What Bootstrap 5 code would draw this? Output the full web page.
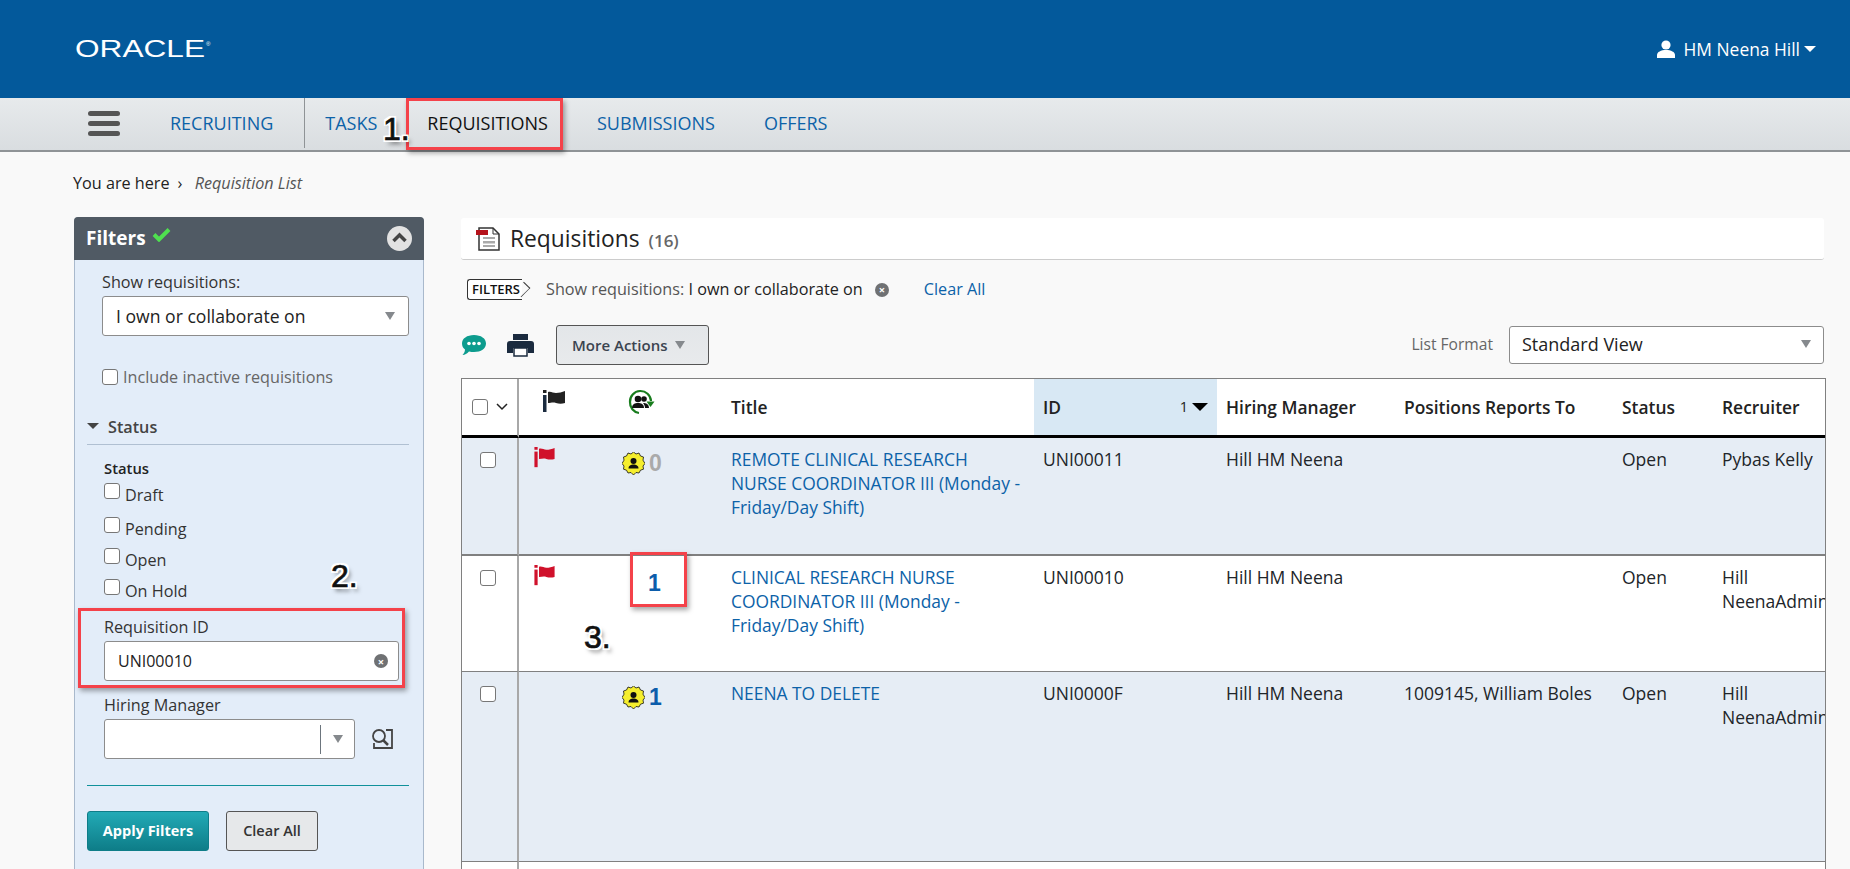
<!DOCTYPE html>
<html lang="en"><head><meta charset="utf-8"><title>Requisitions</title>
<link href="https://cdn.jsdelivr.net/npm/bootstrap@5.3.0/dist/css/bootstrap.min.css" rel="stylesheet">
<style>
html,body{height:869px;overflow:hidden}
body{background:#f9f9f9;font-family:"Open Sans",sans-serif;font-size:16px;color:#222;position:relative}
a{text-decoration:none;color:#0c62a8}
.top-hd{height:98px;background:#03599b;padding:0 34px 0 75px;color:#fff}
.user-nm{font-size:17.4px}
.caret-d{display:inline-block;border:6px solid transparent;border-top-color:currentColor;border-bottom:0}
.main-nav{height:54px;background:linear-gradient(#e7eaec,#d9dde0);border-bottom:2px solid #8f9396;padding:0 0 2px 88px;font-size:18px}
.nav-txt{color:#0c62a8}
.nav-cur{color:#111;margin-left:50px}
.nav-nx{margin-left:49px}
.burger{width:32px;margin-right:50px}
.burger span{display:block;height:5px;border-radius:3px;background:#555;margin:5px 0}
.nav-sep{width:1px;height:50px;background:#8f9396;margin:0 20px 0 31px}
.crumb{padding:19px 0 0 73px;font-size:16.2px;height:65px;color:#222}
.crumb em{color:#555}
.crumb-sep{margin:0 8px}
.page-cols{padding:0 26px 0 74px;gap:37px}
.flt{width:350px;height:660px;background:#e3edf9;border:1px solid #a9b9cc;border-radius:4px 4px 0 0;flex:none}
.flt-hd{height:43px;background:#505a64;color:#fff;margin:-1px -1px 0;border-radius:4px 4px 0 0;padding:0 12px;font-weight:700;font-size:19px}
.chk-ic{vertical-align:3px;margin-left:1px}
.flt-bd{padding:12px 14px 0 12px;color:#333;font-size:16.2px}
.sel-box{height:40px;background:#fff;border:1px solid #8c8c8c;border-radius:3px;padding:0 13px;color:#222;font-size:17.6px}
.val-sm{font-size:16px;width:295px;margin-top:4px}
.tri{display:inline-block;border:5px solid transparent;border-top:8px solid #85898d;border-bottom:0}
.cb{width:16px;height:16px;border:1.5px solid #777;border-radius:3px;background:#fff;flex:none;display:block}
.ind-a{margin-left:15px}
.ind-b{margin-left:17px}
.lbl{line-height:20px}
.cb-row{height:20px;gap:5px}
.inc-row{margin-top:31px;color:#666}
.sec-h{border-bottom:1px solid #b0c0d2;height:36px;font-weight:600;color:#444;margin-top:22px;padding-top:6px}
.sec-car{margin:8px 9px 0 0;color:#444}
.sub-h{color:#222;font-size:14.8px;font-weight:600;margin-top:13px}
.gap-a{margin-top:5px}.gap-b{margin-top:14px}.gap-c{margin-top:11px}
.gap-d{margin-top:18px}.gap-e{margin-top:14px}.gap-f{margin-top:4px}
.hm-box{width:251px;padding-right:0}
.hm-cell{width:34px;height:29px}
.x-big{width:18px;height:18px;font-size:15px;margin-right:-3px}
.btn-apply{height:40px;width:122px;background:linear-gradient(#22aab6,#0e7d88);color:#fff;font-weight:700;border:1px solid #0e7d88;border-radius:3px;font-size:14.5px}
.btn-clear{height:40px;background:#e6e8ea;border:1px solid #555;border-radius:3px;color:#333;font-size:14.5px;font-weight:600;width:92px}
.flt-btns{gap:17px}
.flt-div{border-top:1px solid #10919b;margin:26px 0 25px}
.mn{flex:1;min-width:0;margin-top:1px}
.tt-bar{height:42px;background:#fff;border-bottom:1px solid #ccc;border-radius:3px;padding:1px 0 0 14px;font-size:22.8px;gap:9px}
.tt-ct{font-size:17px;color:#666;font-weight:600;margin-left:3px}
.chips{height:65px;padding:0 0 6px 6px;font-size:16.2px;color:#555}
.chip-val{color:#222}
.chip-tag{font-size:13px;color:#111;border:1px solid #333;border-right:0;border-radius:3px 0 0 3px;padding:0 2px 0 4px;height:21px;line-height:19px;position:relative;font-weight:600;margin-right:24px;background:#fff;flex:none}
.chip-tag::after{content:"";position:absolute;right:-7px;top:3px;width:13px;height:13px;border-top:1px solid #333;border-right:1px solid #333;transform:rotate(45deg) scaleX(.7)}
.x-c{display:inline-flex;width:14px;height:14px;border-radius:50%;background:#6f7173;color:#fff;font-size:11px;font-weight:700;align-items:center;justify-content:center;line-height:1}
.chip-x{margin-left:12px}
.chip-clr{margin-left:35px}
.tools{height:40px;margin-bottom:13px}
.print-ic{margin-left:20px}
.btn-more{height:40px;width:153px;background:linear-gradient(#e3e6e9,#e8eaec);border:1px solid #555;border-radius:3px;color:#3b4450;font-weight:600;font-size:15px;margin-left:22px;padding-left:15px}
.fmt-lbl{font-size:15.6px;color:#666}
.fmt-sel{width:315px;height:38px;margin-left:16px;font-size:18px;background:#fff;border:1px solid #8c8c8c;border-radius:3px;padding:0 12px 2px}
.req-tbl{table-layout:fixed;width:1363px;border-collapse:separate;border-spacing:0;border:solid #808080;border-width:1px 1px 0 1px;background:#fff;font-size:17.5px}
.req-tbl th,.req-tbl td{padding:9px;vertical-align:top;border:0;overflow:hidden}
.req-tbl thead th{height:59px;vertical-align:middle;border-bottom:3px solid #000;font-weight:600;color:#222;font-size:17.4px;padding-top:9px}
.req-tbl td{border-bottom:1px solid #808080;line-height:24px}
.req-tbl td a{font-size:17.4px}
.req-tbl td:first-child,.req-tbl th:first-child{border-right:2px solid #a8a8a8;padding-left:10px}
.req-tbl td:nth-child(2){padding-left:14px}
.req-tbl th:nth-child(2){padding-left:23px}
.req-tbl th:nth-child(3){padding-left:14px}
.shade-r td{background:#e6edf5}
.thick-top td{border-bottom:2px solid #808080}
.h-a{height:118px}.h-b{height:116px}.h-c{height:190px}.h-d{height:10px}
.req-tbl .sorted{background:#d8e8f4}
.srt{font-size:14.5px;font-weight:400}
.srt-c{border-width:8px 8px 0;color:#000}
.hd-ic{margin-bottom:10px}
.flag-ic{display:block}
.bdg-row{margin-top:4px}
.c1{width:57px}.c2{width:94px}.c3{width:109px}.c4{width:312px}.c5{width:183px}.c6{width:178px}.c7{width:218px}.c8{width:100px}.c9{width:112px}
.num{font-family:"Liberation Sans",sans-serif;font-weight:700;font-size:23px;line-height:24px;color:#0c5dab}
.num-off{color:#aaa}
.num-solo{display:block;padding:6px 0 0 26px}
.cb-t{margin:5px 0 0 8px}
.rd{position:absolute;border:3px solid #f4424a;box-shadow:2px 3px 5px rgba(0,0,0,.35)}
.rd-1{left:406px;top:98px;width:157px;height:52px}
.rd-2{left:78px;top:608px;width:327px;height:80px}
.rd-3{left:630px;top:552px;width:57px;height:55px}
.step{position:absolute;font-family:"Liberation Sans",sans-serif;font-size:32px;line-height:36px;color:#111;-webkit-text-stroke:.7px #111;text-shadow:-2px 0 #fff,2px 0 #fff,0 -2px #fff,0 2px #fff,2px 2px #fff,-2px -2px #fff,2px -2px #fff,-2px 2px #fff,3px 4px 4px rgba(0,0,0,.5)}
.s-1{left:383px;top:111px}.s-2{left:331px;top:558px}.s-3{left:584px;top:619px}
</style></head><body>
<header class="top-hd d-flex align-items-center justify-content-between">
<svg width="140" height="32" viewBox="0 0 140 32"><text x="0" y="24" font-family="Liberation Sans" font-size="24" fill="#fff" textLength="130" lengthAdjust="spacingAndGlyphs">ORACLE</text><text x="131" y="13" font-family="Liberation Sans" font-size="6" fill="#fff">®</text></svg>
<div class="user-nm d-flex align-items-center"><svg width="20" height="18" viewBox="0 0 20 18" class="me-2"><circle cx="10" cy="5" r="4.600" fill="#fff"/><path d="M1 18v-3c0-3 4-5 9-5s9 2 9 5v3z" fill="#fff"/></svg>HM Neena Hill<span class="caret-d ms-1"></span></div>
</header>
<nav class="main-nav d-flex align-items-center">
<div class="burger"><span></span><span></span><span></span></div>
<a class="nav-txt" href="#">RECRUITING</a><span class="nav-sep"></span><a class="nav-txt" href="#">TASKS</a>
<a class="nav-cur" href="#">REQUISITIONS</a>
<a class="nav-txt nav-nx" href="#">SUBMISSIONS</a><a class="nav-txt nav-nx" href="#">OFFERS</a>
</nav>
<div class="crumb">You are here<span class="crumb-sep">›</span> <em>Requisition List</em></div>
<div class="page-cols d-flex">
<aside class="flt">
<div class="flt-hd d-flex align-items-center justify-content-between"><span>Filters <svg class="chk-ic" width="19" height="15" viewBox="0 0 19 15"><path d="M2 7.500l5 5L17 2.500" fill="none" stroke="#4fe04f" stroke-width="4"/></svg></span>
<svg width="25" height="25" viewBox="0 0 25 25"><circle cx="12.500" cy="12.500" r="12.500" fill="#e2e2e2"/><path d="M6.500 15l6-6 6 6" fill="none" stroke="#444" stroke-width="3.500"/></svg></div>
<div class="flt-bd">
<div class="ind-a lbl">Show requisitions:</div>
<div class="ind-a sel-box d-flex align-items-center justify-content-between mt-1">I own or collaborate on<span class="tri"></span></div>
<div class="ind-a d-flex align-items-center inc-row cb-row"><span class="cb"></span>Include inactive requisitions</div>
<div class="sec-h d-flex align-items-start"><span class="caret-d sec-car"></span>Status</div>
<div class="ind-b sub-h lbl">Status</div>
<div class="ind-b d-flex cb-row gap-a"><span class="cb"></span>Draft</div>
<div class="ind-b d-flex cb-row gap-b"><span class="cb"></span>Pending</div>
<div class="ind-b d-flex cb-row gap-c"><span class="cb"></span>Open</div>
<div class="ind-b d-flex cb-row gap-c"><span class="cb"></span>On Hold</div>
<div class="ind-b lbl gap-d">Requisition ID</div>
<div class="ind-b sel-box val-sm d-flex align-items-center justify-content-between">UNI00010<span class="x-c x-big">×</span></div>
<div class="ind-b lbl gap-e">Hiring Manager</div>
<div class="ind-b d-flex align-items-center gap-f">
<div class="sel-box hm-box d-flex align-items-center justify-content-end"><span class="hm-cell border-start border-secondary d-flex align-items-center justify-content-center"><span class="tri"></span></span></div>
<svg class="ms-3" width="22" height="22" viewBox="0 0 22 22" fill="none" stroke="#444" stroke-width="1.800"><path d="M15 2h6v18H3v-5"/><circle cx="8" cy="8" r="6"/><path d="M12 12l5 5" stroke-width="2.500"/></svg></div>
<div class="flt-div"></div>
<div class="d-flex flt-btns"><button class="btn-apply">Apply Filters</button><button class="btn-clear">Clear All</button></div>
</div>
</aside>
<main class="mn">
<div class="tt-bar d-flex align-items-center">
<svg width="26" height="26" viewBox="0 0 26 26"><path d="M4 2h14l6 6v16H4z" fill="#fff" stroke="#333" stroke-width="1.500"/><path d="M18 2v6h6" fill="none" stroke="#333"/><path d="M8 11h12v2H8zM8 15h12v2.500H8zM8 19h12v2H8z" fill="#aaa"/><rect x="1" y="4" width="12" height="5" fill="#b5121b"/></svg>
<span>Requisitions <span class="tt-ct">(16)</span></span></div>
<div class="chips d-flex align-items-center">
<span class="chip-tag">FILTERS</span>Show requisitions:&nbsp;<span class="chip-val">I own or collaborate on</span><span class="x-c chip-x">×</span><a href="#" class="chip-clr">Clear All</a></div>
<div class="tools d-flex align-items-center">
<svg width="26" height="22" viewBox="0 0 26 22"><path d="M13 1c7 0 12 3.500 12 8.500S20 18 13 18c-2 0-3 0-5-.5C6 19.500 4 21 1.500 21 3 19.500 4 17.500 4 15.500 2 14 1 12 1 9.500 1 4.500 6 1 13 1z" fill="#0d9c8e"/><circle cx="8" cy="9.500" r="1.800" fill="#fff"/><circle cx="13" cy="9.500" r="1.800" fill="#fff"/><circle cx="18" cy="9.500" r="1.800" fill="#fff"/></svg>
<svg class="print-ic" width="27" height="24" viewBox="0 0 27 24"><path d="M6 1h15v6H6z" fill="#1b2b3f"/><path d="M3 8h21a3 3 0 0 1 3 3v9h-6v-5H6v5H0v-9a3 3 0 0 1 3-3z" fill="#1b2b3f"/><path d="M7 15h13v8H7z" fill="#fff" stroke="#1b2b3f" stroke-width="1.500"/></svg>
<button class="btn-more d-flex align-items-center gap-2">More Actions <span class="tri"></span></button>
<div class="ms-auto d-flex align-items-center"><span class="fmt-lbl">List Format</span>
<div class="fmt-sel d-flex align-items-center justify-content-between">Standard View<span class="tri"></span></div></div>
</div>
<table class="req-tbl table mb-0">
<colgroup><col class="c1"><col class="c2"><col class="c3"><col class="c4"><col class="c5"><col class="c6"><col class="c7"><col class="c8"><col class="c9"></colgroup>
<thead><tr><th><span class="d-flex align-items-center gap-2"><span class="cb"></span><svg width="12" height="8" viewBox="0 0 12 8"><path d="M1 1l5 5 5-5" fill="none" stroke="#222" stroke-width="1.500"/></svg></span></th>
<th><svg class="d-block hd-ic" width="24" height="24" viewBox="0 0 24 24"><rect x="1" y="0" width="3.500" height="3" fill="#222"/><rect x="1" y="5" width="3.500" height="17" fill="#1b2b3f"/><path d="M6 2c3-1 5 1 8 1 3 0 6-1 9-2v12c-3 1-6 1-9 0-3-1-5 0-8 0z" fill="#222"/></svg></th>
<th><svg class="d-block hd-ic" width="28" height="26" viewBox="0 0 28 26"><path d="M3 13a10.500 10.500 0 0 1 21-1M3 13a10.500 10.500 0 0 0 9 11" fill="none" stroke="#187c1d" stroke-width="2.200"/><path d="M19.500 12.500h8L23.500 18z" fill="#187c1d"/><circle cx="11" cy="10" r="3.300" fill="#111"/><path d="M5 19c0-4 3-5 6-5s6 1 6 5z" fill="#111"/><circle cx="17" cy="10" r="2.800" fill="#111"/><path d="M16 14c3 0 6 1 6 5h-4c0-2-1-4-2-5z" fill="#111"/></svg></th>
<th>Title</th><th class="sorted"><span class="d-flex justify-content-between align-items-center">ID<span class="srt d-flex align-items-center gap-1">1<span class="caret-d srt-c"></span></span></span></th><th>Hiring Manager</th><th>Positions Reports To</th><th>Status</th><th>Recruiter</th></tr></thead>
<tbody>
<tr class="shade-r thick-top h-a"><td><span class="cb cb-t"></span></td>
<td><svg class="flag-ic" width="23" height="22" viewBox="0 0 24 24"><rect x="1" y="0" width="3.500" height="3" fill="#d0112b"/><rect x="1" y="5" width="3.500" height="17" fill="#d0112b"/><path d="M6 2c3-1 5 1 8 1 3 0 6-1 9-2v12c-3 1-6 1-9 0-3-1-5 0-8 0z" fill="#d0112b"/></svg></td>
<td><span class="d-flex align-items-center gap-1 bdg-row"><svg width="23" height="23" viewBox="0 0 23 23"><path d="M11.500 0l2.500 2 3-1 1.500 3 3 1-.5 3.200L23 11.500l-2 2.500 .5 3.200-3 1L17 21l-3-.5-2.500 2.500L9 20.500 6 21l-1.500-2.800-3-1 .5-3.200L0 11.500l2-3.300L1.500 5l3-1L6 1l3 1z" fill="#f5ee2e" stroke="#111" stroke-width=".8"/><circle cx="11.500" cy="9" r="3" fill="#111"/><path d="M6.500 16.500c0-3 2.500-4 5-4s5 1 5 4z" fill="#111"/></svg><span class="num num-off">0</span></span></td>
<td><a href="#">REMOTE CLINICAL RESEARCH NURSE COORDINATOR III (Monday - Friday/Day Shift)</a></td><td>UNI00011</td><td>Hill HM Neena</td><td></td><td>Open</td><td>Pybas Kelly</td></tr>
<tr class="h-b"><td><span class="cb cb-t"></span></td>
<td><svg class="flag-ic" width="23" height="22" viewBox="0 0 24 24"><rect x="1" y="0" width="3.500" height="3" fill="#d0112b"/><rect x="1" y="5" width="3.500" height="17" fill="#d0112b"/><path d="M6 2c3-1 5 1 8 1 3 0 6-1 9-2v12c-3 1-6 1-9 0-3-1-5 0-8 0z" fill="#d0112b"/></svg></td>
<td><span class="num num-solo">1</span></td>
<td><a href="#">CLINICAL RESEARCH NURSE COORDINATOR III (Monday - Friday/Day Shift)</a></td><td>UNI00010</td><td>Hill HM Neena</td><td></td><td>Open</td><td>Hill NeenaAdmin</td></tr>
<tr class="shade-r h-c"><td><span class="cb cb-t"></span></td><td></td>
<td><span class="d-flex align-items-center gap-1 bdg-row"><svg width="23" height="23" viewBox="0 0 23 23"><path d="M11.500 0l2.500 2 3-1 1.500 3 3 1-.5 3.200L23 11.500l-2 2.500 .5 3.200-3 1L17 21l-3-.5-2.500 2.500L9 20.500 6 21l-1.500-2.800-3-1 .5-3.200L0 11.500l2-3.300L1.500 5l3-1L6 1l3 1z" fill="#f5ee2e" stroke="#111" stroke-width=".8"/><circle cx="11.500" cy="9" r="3" fill="#111"/><path d="M6.500 16.500c0-3 2.500-4 5-4s5 1 5 4z" fill="#111"/></svg><span class="num">1</span></span></td>
<td><a href="#">NEENA TO DELETE</a></td><td>UNI0000F</td><td>Hill HM Neena</td><td>1009145, William Boles</td><td>Open</td><td>Hill NeenaAdmin</td></tr>
<tr class="h-d"><td></td><td></td><td></td><td></td><td></td><td></td><td></td><td></td><td></td></tr>
</tbody></table>
</main>
</div>
<div class="rd rd-1"></div><div class="rd rd-2"></div><div class="rd rd-3"></div>
<div class="step s-1">1.</div><div class="step s-2">2.</div><div class="step s-3">3.</div>
</body></html>
